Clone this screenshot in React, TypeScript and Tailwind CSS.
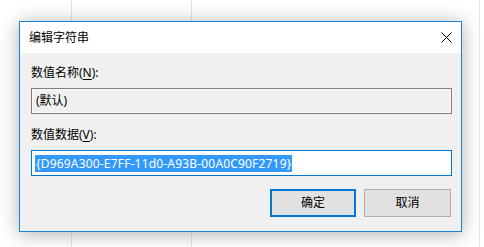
import React from "react";

const font = { fontFamily: '"Segoe UI", "Noto Sans", "Noto Sans CJK SC", sans-serif' };

export default function App() {
  return (
    <div className="relative w-[484px] h-[247px] overflow-hidden bg-white" style={font}>
      {/* background window columns */}
      <div className="flex h-full">
        <div className="w-[72px] h-full border-r border-[#dfe7f0]" />
        <div className="w-[120px] h-full border-r border-[#dfe7f0]" />
        <div className="w-[288px] h-full border-r border-[#dfe7f0]" />
        <div className="flex-1" />
      </div>

      {/* dialog */}
      <div className="absolute left-[19px] top-[21px] w-[443px] h-[211px] border border-[#1883d7] bg-[#f0f0f0] shadow-[0_2px_18px_rgba(0,0,0,0.32)] flex flex-col">
        <div className="h-[31px] bg-white flex items-center justify-between pl-[9px] pr-[9px]">
          <span className="text-[12px] leading-[16px] text-black pt-[1px]">编辑字符串</span>
          <svg width="11" height="11" viewBox="0 0 11 11">
            <path d="M0.5 0.5 L10.5 10.5 M10.5 0.5 L0.5 10.5" stroke="#000" strokeWidth="1" fill="none" />
          </svg>
        </div>
        <div className="flex-1 flex flex-col pl-[11px] pr-[9px] pt-[12px]">
          <div className="text-[12px] leading-[16px] text-black">
            数值名称(<span className="underline underline-offset-2">N</span>):
          </div>
          <div className="mt-[7px] h-[26px] w-[421px] border border-[#7f7f7f] shadow-[inset_0_0_0_1px_#f9f9f9] bg-[#f0f0f0] flex items-center pl-[4px]">
            <span className="text-[12px] leading-[16px] text-black">(默认)</span>
          </div>
          <div className="mt-[13px] text-[12px] leading-[16px] text-black">
            数值数据(<span className="underline underline-offset-2">V</span>):
          </div>
          <div className="mt-[7px] h-[26px] w-[421px] border border-[#0078d7] bg-white flex items-center pl-[3px]">
            <span className="text-[12px] leading-[17px] tracking-[0.18px] text-white bg-[#3399ff] px-[1px]">
              {"{D969A300-E7FF-11d0-A93B-00A0C90F2719}"}
            </span>
          </div>
          <div className="mt-[13px] flex justify-end gap-[8px] pr-[1px]">
            <button className="w-[86px] h-[28px] border-2 border-[#0078d7] bg-[#e1e1e1] text-[12px] text-black flex items-center justify-center">
              确定
            </button>
            <button className="w-[87px] h-[28px] border border-[#adadad] bg-[#e1e1e1] text-[12px] text-black flex items-center justify-center">
              取消
            </button>
          </div>
        </div>
      </div>
    </div>
  );
}
